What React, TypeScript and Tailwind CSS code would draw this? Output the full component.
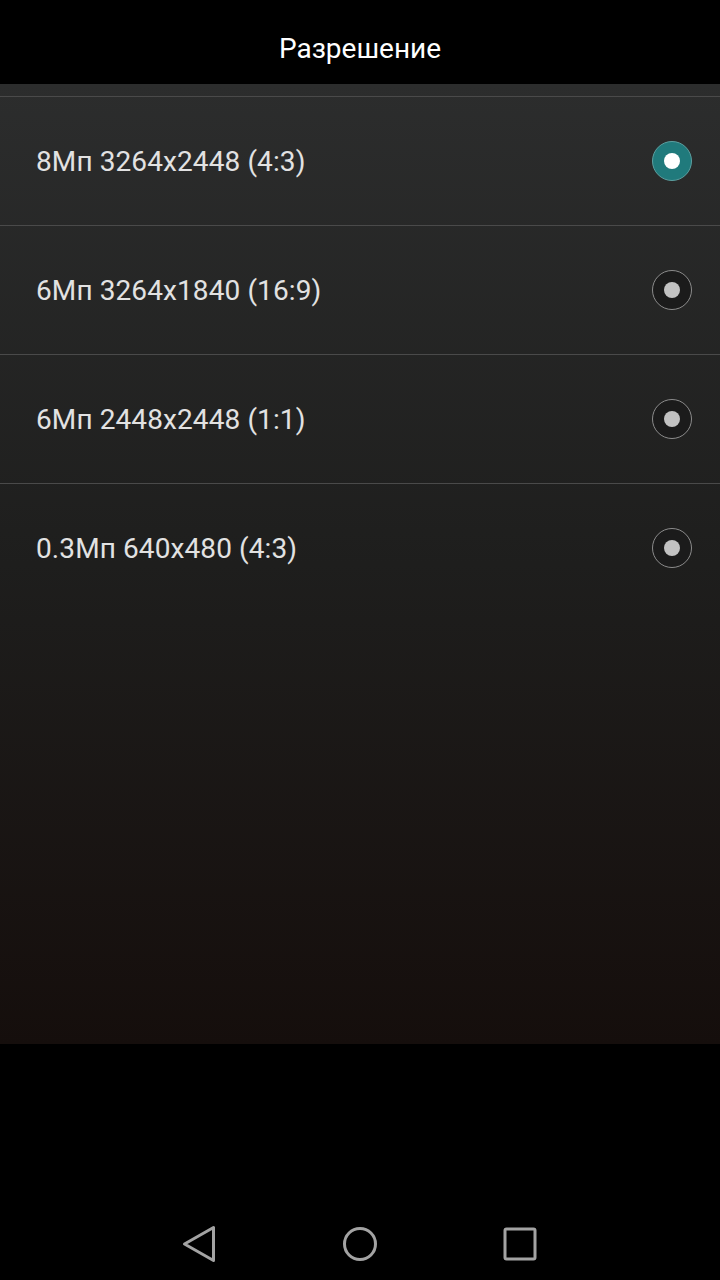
const options = [
  { label: '8Мп 3264x2448 (4:3)', selected: true },
  { label: '6Мп 3264x1840 (16:9)', selected: false },
  { label: '6Мп 2448x2448 (1:1)', selected: false },
  { label: '0.3Мп 640x480 (4:3)', selected: false },
]

function Radio({ selected }: { selected: boolean }) {
  if (selected) {
    return (
      <div className="w-[40px] h-[40px] rounded-full bg-[#207a7c] border border-[#5c9fa0] flex items-center justify-center">
        <div className="w-[16px] h-[16px] rounded-full bg-white" />
      </div>
    )
  }
  return (
    <div className="w-[40px] h-[40px] rounded-full bg-[#1b1b1b] border-[1.5px] border-[#8c8c8c] flex items-center justify-center">
      <div className="w-[16px] h-[16px] rounded-full bg-[#c2c2c2]" />
    </div>
  )
}

export default function App() {
  return (
    <div className="w-[720px] h-[1280px] bg-black flex flex-col" style={{ fontFamily: 'Roboto, "Noto Sans", sans-serif' }}>
      {/* Title bar */}
      <div className="h-[84px] flex items-center justify-center shrink-0">
        <h1 className="text-[28px] text-white mt-[14px]">Разрешение</h1>
      </div>

      {/* Options panel */}
      <div className="h-[960px] bg-linear-to-b from-[#2c2d2d] via-[#1e1e1d] to-[#150e0c] pt-[12px]">
        {options.map((opt) => (
          <div key={opt.label} className="h-[129px] border-t border-[#4a4a4a] flex items-center justify-between pl-[36px] pr-[28px]">
            <span className="text-[28px] text-[#e2e2e2] tracking-[0.1px] mt-[1px]">{opt.label}</span>
            <Radio selected={opt.selected} />
          </div>
        ))}
      </div>

      {/* Navigation bar */}
      <div className="flex-1 flex items-end justify-center pb-[16px]">
        <div className="flex items-center h-[40px] gap-[125px] mr-[3px]">
          <svg width="36" height="40" viewBox="0 0 36 40" fill="none" stroke="#a3a3a3" strokeWidth="3" strokeLinejoin="round">
            <path d="M32.5 3.5 L32.5 36.5 L3.5 20 Z" />
          </svg>
          <svg width="36" height="36" viewBox="0 0 36 36" fill="none" stroke="#a3a3a3" strokeWidth="3">
            <circle cx="18" cy="18" r="15.5" />
          </svg>
          <svg width="34" height="34" viewBox="0 0 34 34" fill="none" stroke="#a3a3a3" strokeWidth="3">
            <rect x="2" y="2" width="30" height="30" rx="1.5" />
          </svg>
        </div>
      </div>
    </div>
  )
}
